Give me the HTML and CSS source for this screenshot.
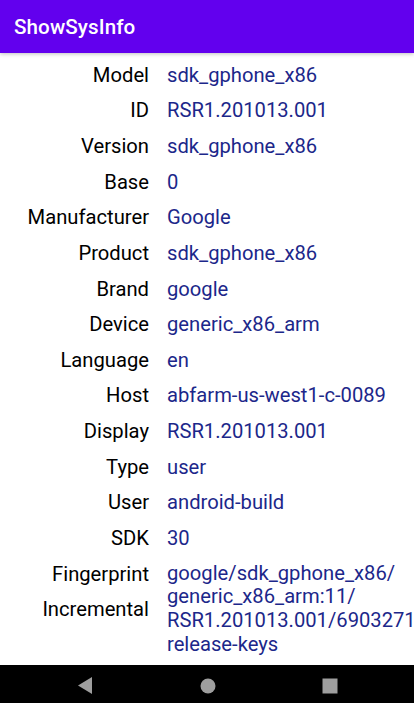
FILE: index.html
```html
<!DOCTYPE html>
<html>
<head>
<meta charset="utf-8">
<link rel="stylesheet" href="styles.css">
</head>
<body>
<div class="screen">
  <header class="appbar"><span class="title">ShowSysInfo</span></header>
  <main class="content">
    <div class="grid">
      <div class="label">Model</div><div class="value">sdk_gphone_x86</div>
      <div class="label">ID</div><div class="value">RSR1.201013.001</div>
      <div class="label">Version</div><div class="value">sdk_gphone_x86</div>
      <div class="label">Base</div><div class="value">0</div>
      <div class="label">Manufacturer</div><div class="value">Google</div>
      <div class="label">Product</div><div class="value">sdk_gphone_x86</div>
      <div class="label">Brand</div><div class="value">google</div>
      <div class="label">Device</div><div class="value">generic_x86_arm</div>
      <div class="label">Language</div><div class="value">en</div>
      <div class="label">Host</div><div class="value">abfarm-us-west1-c-0089</div>
      <div class="label">Display</div><div class="value">RSR1.201013.001</div>
      <div class="label">Type</div><div class="value">user</div>
      <div class="label">User</div><div class="value">android-build</div>
      <div class="label">SDK</div><div class="value">30</div>
    </div>
    <div class="multi">
      <div class="labels">
        <div class="label">Fingerprint</div>
        <div class="label">Incremental</div>
      </div>
      <div class="wrapped">
        <div class="line">google/sdk_gphone_x86/</div>
        <div class="line">generic_x86_arm:11/</div>
        <div class="line">RSR1.201013.001/6903271</div>
        <div class="line">release-keys</div>
      </div>
    </div>
  </main>
  <nav class="navbar">
    <svg class="nav-icon" width="16" height="18" viewBox="0 0 16 18"><polygon points="14,0 14,17 0,8.5" fill="#9e9e9e"/></svg>
    <svg class="nav-icon" width="16" height="16" viewBox="0 0 16 16"><circle cx="8" cy="8" r="7.5" fill="#9e9e9e"/></svg>
    <svg class="nav-icon" width="16" height="16" viewBox="0 0 16 16"><rect x="0.5" y="0.5" width="15" height="15" fill="#9e9e9e"/></svg>
  </nav>
</div>
</body>
</html>
```

FILE: styles.css
```css
* { box-sizing: border-box; }
html, body { margin: 0; padding: 0; background: #ffffff; }
body { font-family: Roboto, "Noto Sans", sans-serif; }
.screen {
  width: 414px;
  height: 703px;
  display: flex;
  flex-direction: column;
  overflow: hidden;
}
.appbar {
  height: 53px;
  flex: none;
  background: #6200ee;
  display: flex;
  align-items: center;
  padding-left: 14px;
  box-shadow: 0 1px 4px rgba(0,0,0,0.25);
  position: relative;
  z-index: 1;
}
.title {
  color: #ffffff;
  font-size: 20.6px;
  font-weight: 500;
  letter-spacing: 0.1px;
}
.content {
  flex: 1;
  overflow: hidden;
  padding-top: 4px;
  font-size: 20.2px;
}
.grid {
  display: grid;
  grid-template-columns: 149px 1fr;
  column-gap: 18px;
  grid-auto-rows: 35.64px;
  align-items: center;
}
.label { color: #000000; text-align: right; white-space: nowrap; }
.value { color: #1c278a; white-space: nowrap; }
.multi {
  display: grid;
  grid-template-columns: 149px 1fr;
  column-gap: 18px;
}
.labels { display: flex; flex-direction: column; }
.labels .label { height: 35.64px; display: flex; align-items: center; justify-content: flex-end; }
.wrapped { padding-top: 6px; color: #1c278a; min-width: 0; overflow: hidden; }
.line { height: 23.7px; line-height: 23.7px; white-space: nowrap; }
.navbar {
  height: 38px;
  flex: none;
  background: #000000;
  display: flex;
  align-items: center;
  padding-left: 78px;
  gap: 106px;
  padding-top: 3px;
}
.nav-icon { display: block; }
```
